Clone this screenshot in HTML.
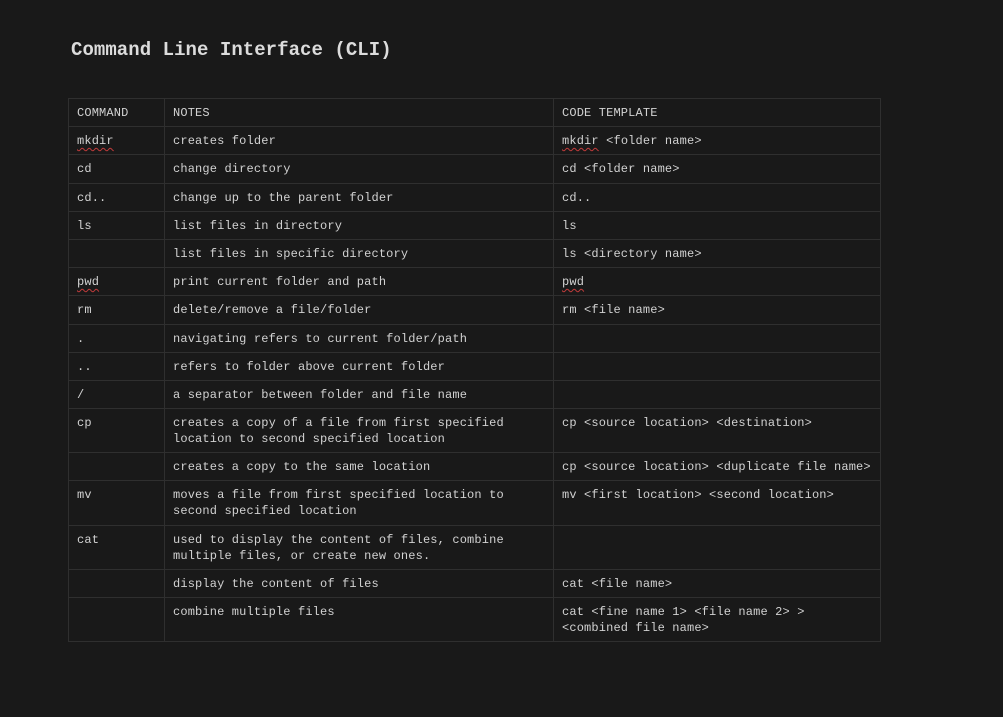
<!DOCTYPE html>
<html><head><meta charset="utf-8"><style>
html,body{margin:0;padding:0;background:#191919;width:1003px;height:717px;overflow:hidden}
body{font-family:"Liberation Mono",monospace;color:#d2d2d2}
h1{position:absolute;left:71px;top:38px;margin:0;font-size:19px;font-weight:bold;color:#dcdcdc;letter-spacing:0.05px;line-height:24px}
table{position:absolute;left:68px;top:98px;border-collapse:collapse;table-layout:fixed;width:812px}
td{border:1px solid #2f2f2f;padding:6px 8px 5.2px 8px;vertical-align:top;font-size:12px;line-height:16px;letter-spacing:0.15px;height:16px;white-space:nowrap;overflow:visible}
tr.d td{height:32px}
.sq{text-decoration:underline wavy #c23b3b;text-decoration-thickness:1px;text-underline-offset:3px}
</style></head><body>
<h1>Command Line Interface (CLI)</h1>
<table>
<colgroup><col style="width:96px"><col style="width:389px"><col style="width:327px"></colgroup>
<tr class="s"><td>COMMAND</td><td>NOTES</td><td>CODE TEMPLATE</td></tr>
<tr class="s"><td><span class="sq">mkdir</span></td><td>creates folder</td><td><span class="sq">mkdir</span> &lt;folder name&gt;</td></tr>
<tr class="s"><td>cd</td><td>change directory</td><td>cd &lt;folder name&gt;</td></tr>
<tr class="s"><td>cd..</td><td>change up to the parent folder</td><td>cd..</td></tr>
<tr class="s"><td>ls</td><td>list files in directory</td><td>ls</td></tr>
<tr class="s"><td></td><td>list files in specific directory</td><td>ls &lt;directory name&gt;</td></tr>
<tr class="s"><td><span class="sq">pwd</span></td><td>print current folder and path</td><td><span class="sq">pwd</span></td></tr>
<tr class="s"><td>rm</td><td>delete/remove a file/folder</td><td>rm &lt;file name&gt;</td></tr>
<tr class="s"><td>.</td><td>navigating refers to current folder/path</td><td></td></tr>
<tr class="s"><td>..</td><td>refers to folder above current folder</td><td></td></tr>
<tr class="s"><td>/</td><td>a separator between folder and file name</td><td></td></tr>
<tr class="d"><td>cp</td><td>creates a copy of a file from first specified<br>location to second specified location</td><td>cp &lt;source location&gt; &lt;destination&gt;</td></tr>
<tr class="s"><td></td><td>creates a copy to the same location</td><td>cp &lt;source location&gt; &lt;duplicate file name&gt;</td></tr>
<tr class="d"><td>mv</td><td>moves a file from first specified location to<br>second specified location</td><td>mv &lt;first location&gt; &lt;second location&gt;</td></tr>
<tr class="d"><td>cat</td><td>used to display the content of files, combine<br>multiple files, or create new ones.</td><td></td></tr>
<tr class="s"><td></td><td>display the content of files</td><td>cat &lt;file name&gt;</td></tr>
<tr class="d"><td></td><td>combine multiple files</td><td>cat &lt;fine name 1&gt; &lt;file name 2&gt; &gt;<br>&lt;combined file name&gt;</td></tr>
</table>
</body></html>
